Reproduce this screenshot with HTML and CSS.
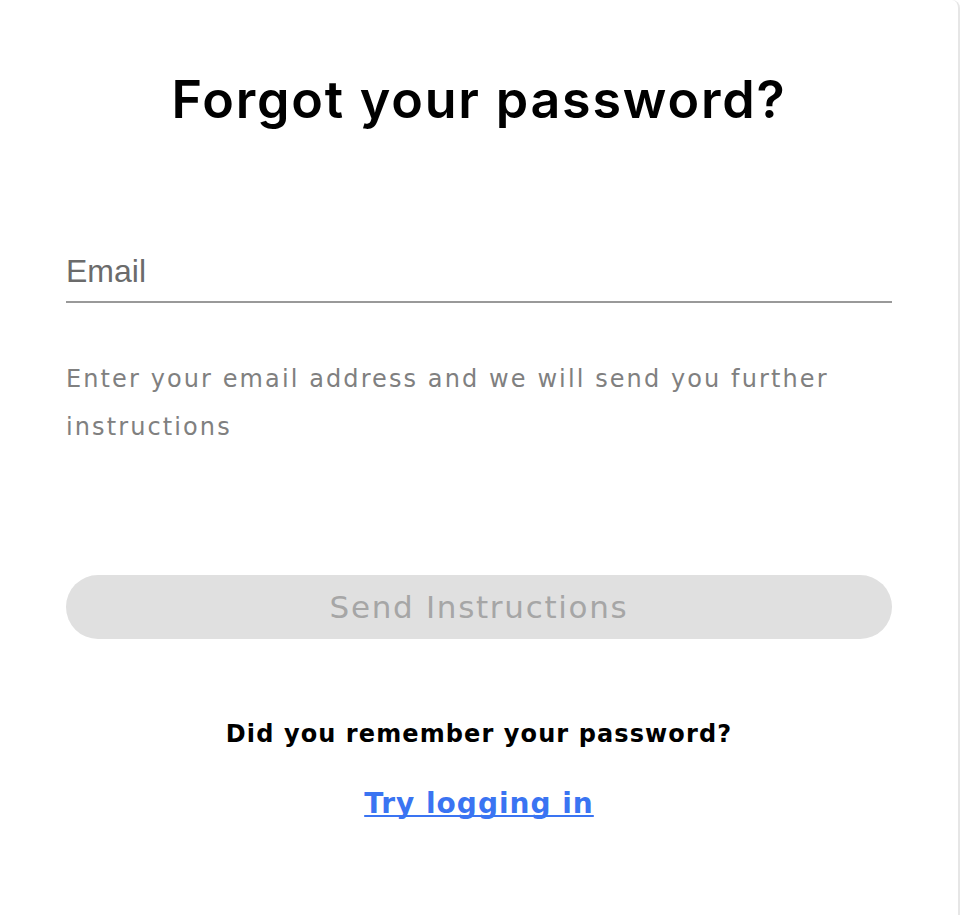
FILE: index.html
```html
<!DOCTYPE html>
<html lang="en">
<head>
<meta charset="utf-8">
<title>Forgot your password?</title>
<link rel="stylesheet" href="styles.css">
</head>
<body>
<main class="card">
  <h1 class="title">Forgot your password?</h1>
  <form class="form" onsubmit="return false">
    <label class="field">
      <input class="field-input" type="email" placeholder="Email">
    </label>
    <p class="help">Enter your email address and we will send you further instructions</p>
    <button class="submit" type="submit" disabled>Send Instructions</button>
  </form>
  <p class="remember">Did you remember your password?</p>
  <p class="login"><a class="login-link" href="#">Try logging in</a></p>
</main>
</body>
</html>
```
FILE: styles.css
```css
html, body {
  margin: 0;
  padding: 0;
  background: #ffffff;
}

.card {
  box-sizing: border-box;
  width: 960px;
  min-height: 915px;
  padding: 69px 66px 0 66px;
  border-right: 2px solid #e6e6e6;
  border-top-right-radius: 8px;
  display: flex;
  flex-direction: column;
  font-family: "DejaVu Sans", "Noto Sans", sans-serif;
}

.title {
  margin: 0;
  font-family: Inter, "Noto Sans", sans-serif;
  font-size: 52px;
  line-height: 62px;
  font-weight: 600;
  letter-spacing: 1.8px;
  color: #000;
  text-align: center;
}

.form {
  display: flex;
  flex-direction: column;
  margin: 120px 0 0;
}

.field {
  display: block;
  border-bottom: 2px solid #999999;
  padding-bottom: 10px;
}

.field-input {
  display: block;
  width: 100%;
  box-sizing: border-box;
  border: 0;
  outline: none;
  padding: 0;
  margin: 0;
  height: 40px;
  font-family: "Liberation Sans", Arial, sans-serif;
  font-size: 32px;
  line-height: 40px;
  color: #333;
  background: transparent;
}

.field-input::placeholder {
  color: #6b6b6b;
  opacity: 1;
}

.help {
  margin: 52px 0 0;
  font-size: 24px;
  line-height: 48px;
  letter-spacing: 2.1px;
  color: #808080;
}

.submit {
  margin-top: 124px;
  height: 64px;
  border: 0;
  border-radius: 32px;
  background: #e0e0e0;
  color: #a6a6a6;
  font-family: "DejaVu Sans", "Noto Sans", sans-serif;
  font-size: 31px;
  letter-spacing: 1.7px;
  font-weight: 400;
  display: flex;
  align-items: center;
  justify-content: center;
  padding: 0;
}

.remember {
  margin: 79px 0 0;
  font-size: 24px;
  line-height: 32px;
  font-weight: 700;
  letter-spacing: 1.1px;
  color: #000;
  text-align: center;
}

.login {
  margin: 34px 0 0;
  font-size: 28px;
  line-height: 40px;
  font-weight: 700;
  letter-spacing: 1px;
  text-align: center;
}

.login-link {
  color: #3a74f2;
  text-decoration: underline;
  text-decoration-thickness: 2px;
  text-underline-offset: 2px;
  text-decoration-skip-ink: none;
}
```
